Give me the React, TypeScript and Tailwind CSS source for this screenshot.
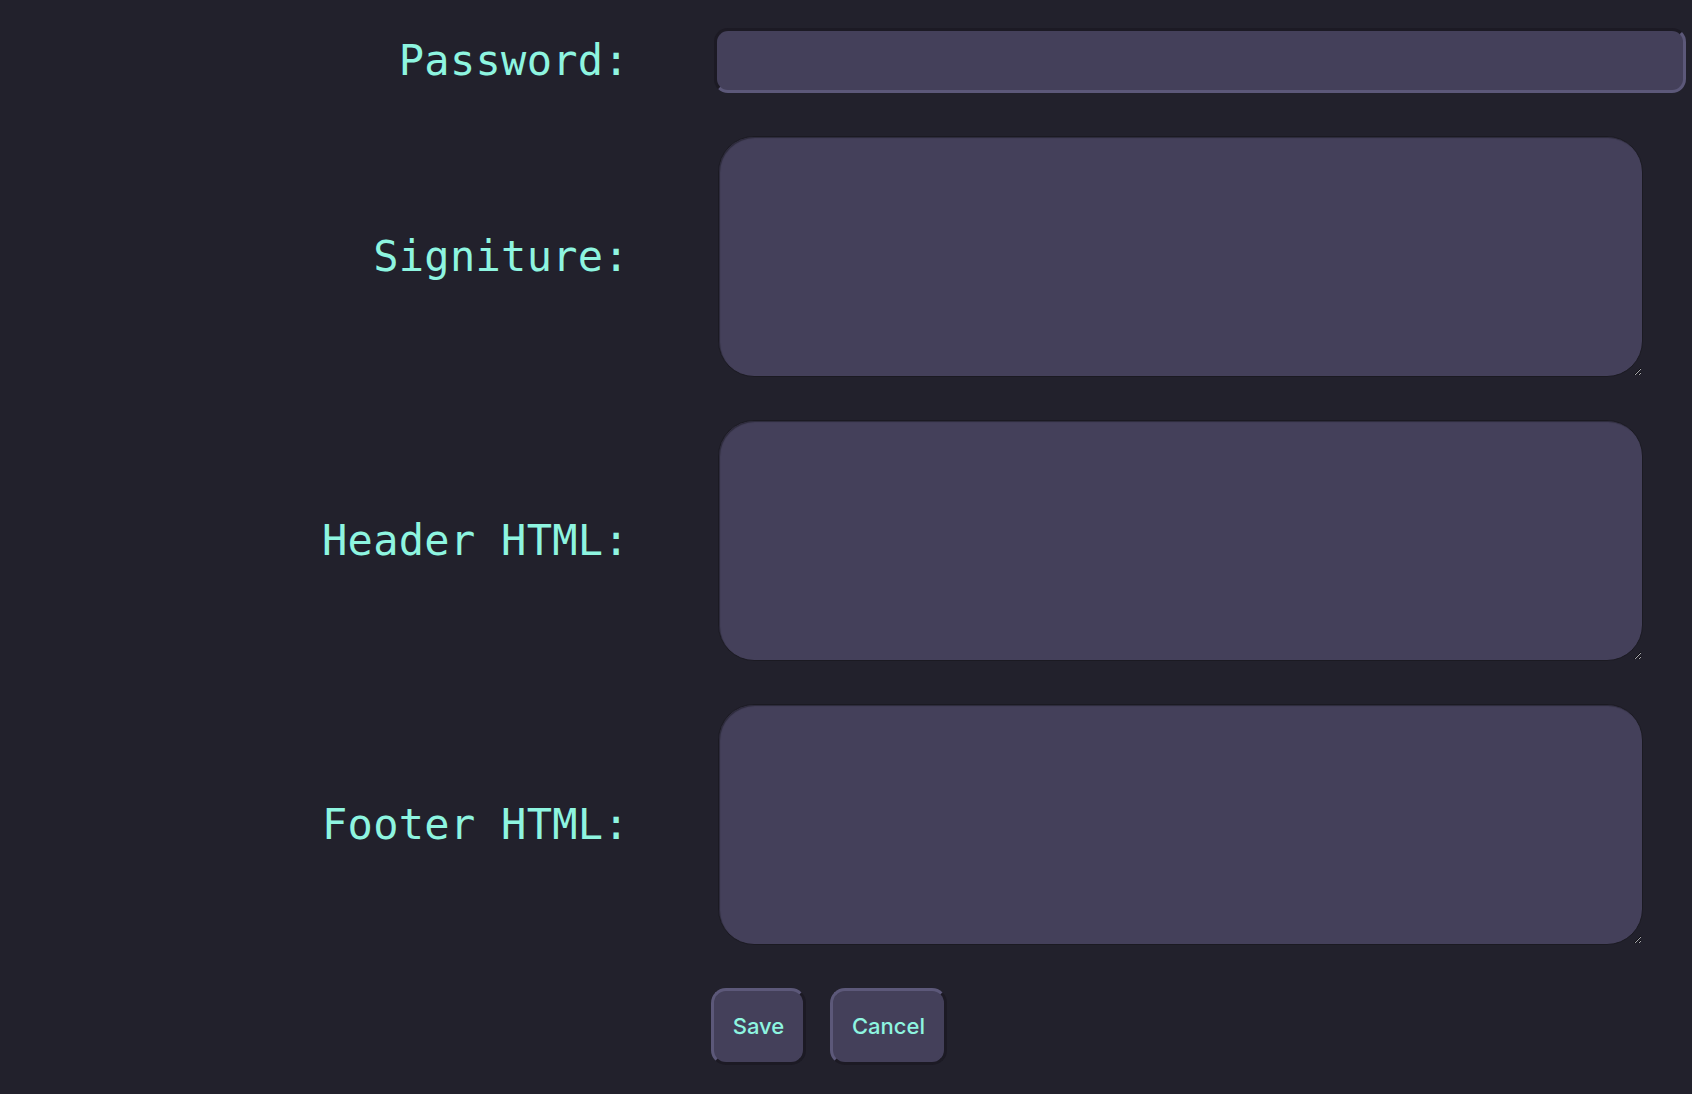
export default function App() {
  const label = "text-right text-[42px] leading-none text-[#8ef5e0] [font-family:'DejaVu_Sans_Mono',monospace] tracking-[0.3px]";
  const area = "ml-[10px] w-[925px] h-[241px] rounded-[36px] bg-[#44405a] border border-[#1b1a22] shadow-[inset_1px_1px_1px_rgba(0,0,0,0.35)] outline-none [color-scheme:dark]";
  const btn = "h-[77px] rounded-[15px] bg-[#44405a] border-[3px] [border-style:outset] border-[#5c5879] text-[22px] font-medium text-[#8ef5e0] [font-family:Inter,sans-serif]";
  return (
    <div className="min-h-screen w-full bg-[#22212c] pt-[28px] overflow-hidden">
      <div className="grid grid-cols-[629px_auto] gap-x-[79px] gap-y-[43px] items-center">
        <label className={label}>Password:</label>
        <input type="password" className="ml-[6px] w-[972px] h-[65px] rounded-[14px] bg-[#44405a] border-[3px] [border-style:inset] border-[#5c5879] outline-none" />
        <label className={label}>Signiture:</label>
        <textarea className={area} />
        <label className={label}>Header HTML:</label>
        <textarea className={area} />
        <label className={label}>Footer HTML:</label>
        <textarea className={area} />
        <div />
        <div className="ml-[3px] flex gap-[24px]">
          <button className={`${btn} w-[95px]`}>Save</button>
          <button className={`${btn} w-[117px]`}>Cancel</button>
        </div>
      </div>
    </div>
  );
}
